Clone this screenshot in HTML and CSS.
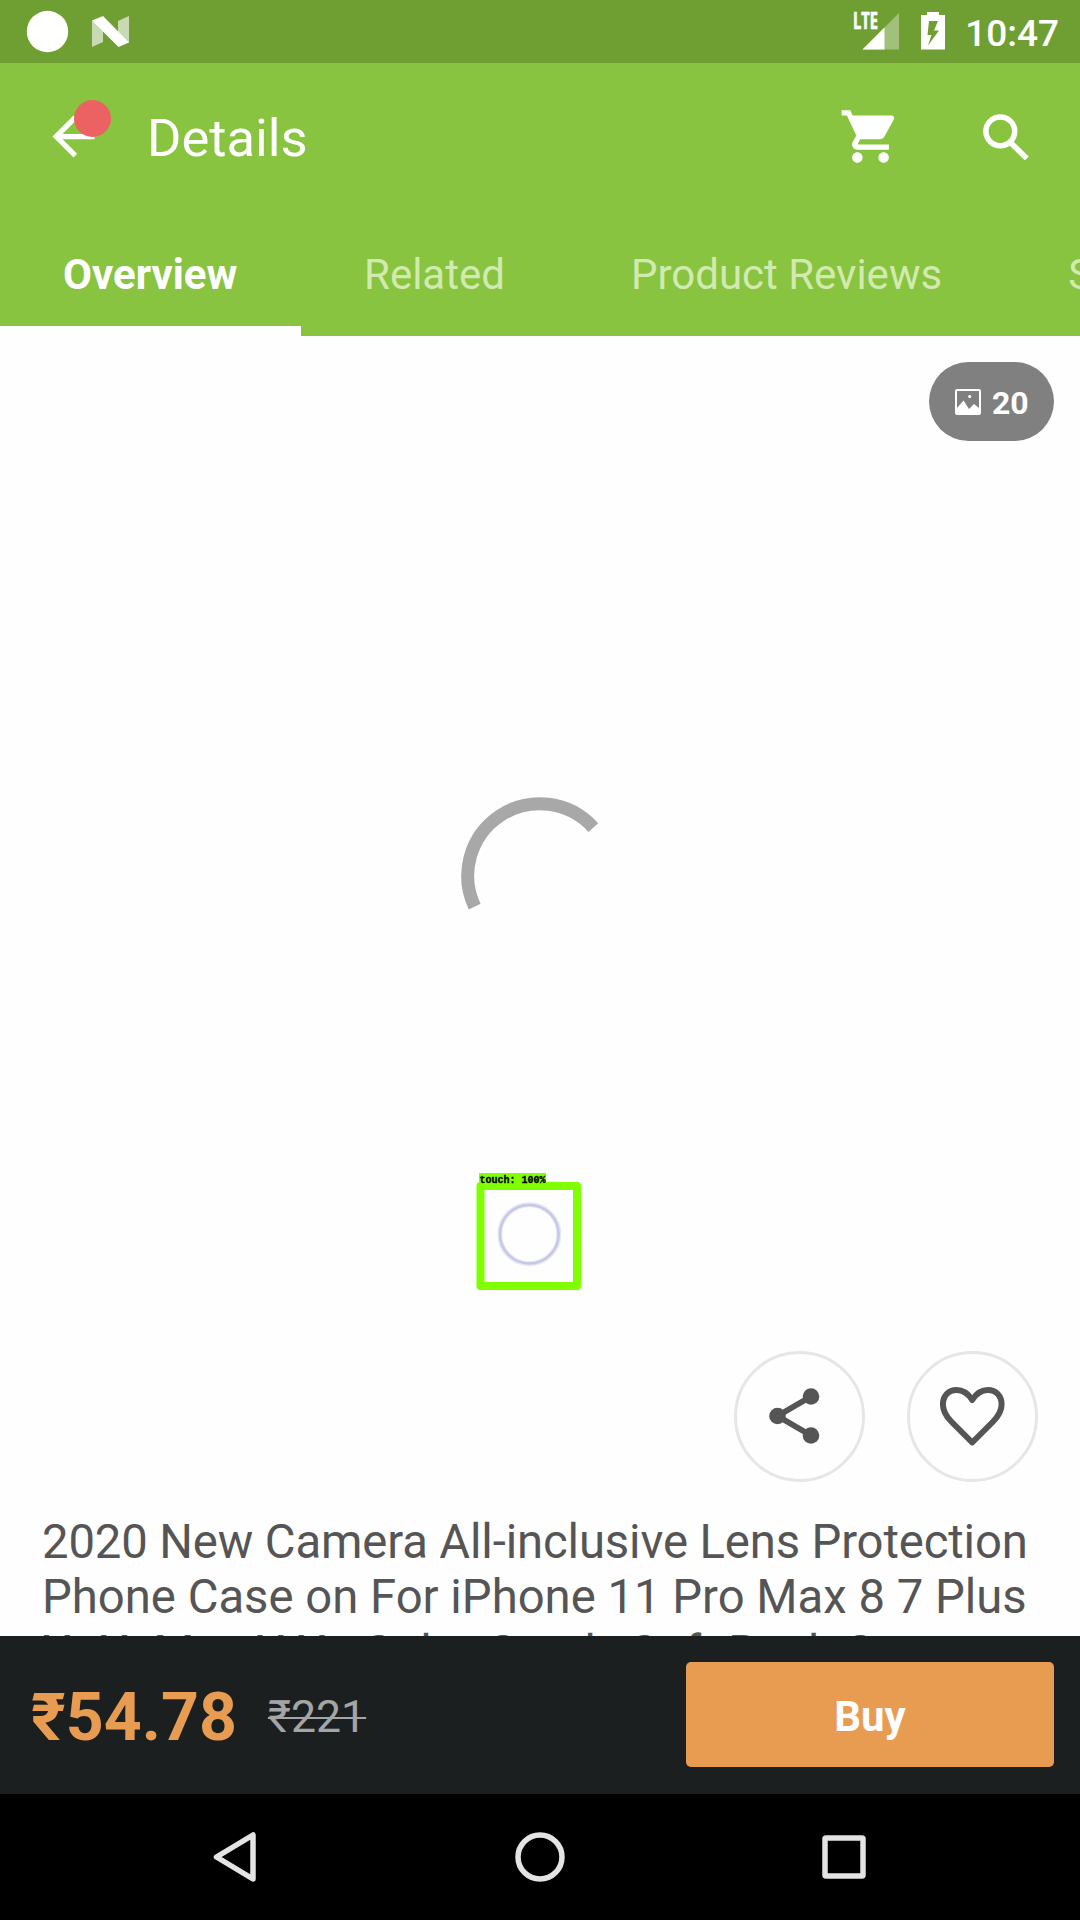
FILE: index.html
```html
<!DOCTYPE html>
<html lang="en">
<head>
<meta charset="utf-8">
<title>Details</title>
<link rel="stylesheet" href="styles.css">
</head>
<body>
<div class="screen">
  <div class="status-bar">
    <svg class="status-left" viewBox="0 0 140 63">
      <circle cx="47.5" cy="31.5" r="20.7" fill="#fff"/>
      <path d="M92 21l11 5v16L92 47zM118 21l11-5v27l-11-5z" fill="#fff" opacity=".62"/>
      <path d="M92 20.5L103 16l26 26.500L118.500 47z" fill="#fff"/>
    </svg>
    <div class="status-right">
      <svg class="signal" viewBox="0 0 46 37">
        <path d="M46 0V36.500H9.500z" fill="#fff" opacity=".35"/>
        <path d="M31.500 14.500v22h-22z" fill="#fff"/>
        <text class="lte" x="0" y="16.300" textLength="25" lengthAdjust="spacingAndGlyphs">LTE</text>
      </svg>
      <svg class="battery" viewBox="0 0 24 38"><path fill="#fff" fill-rule="evenodd" d="M6 0h12v3h6v34.500H0V3h6zM8 9L6.500 23h4L7 33.500L18 18.500h-5L17 9z"/></svg>
      <span class="time">10:47</span>
    </div>
  </div>
  <header class="header">
    <div class="toolbar">
      <div class="back">
        <svg viewBox="0 0 24 24"><path fill="#fff" d="M20 11H7.830l5.590-5.590L12 4l-8 8 8 8 1.410-1.410L7.830 13H20v-2z"/></svg>
        <span class="dot"></span>
      </div>
      <h1 class="title">Details</h1>
      <svg class="cart" viewBox="0 0 24 24"><path fill="#fff" d="M7 18c-1.100 0-1.990.900-1.990 2S5.900 22 7 22s2-.9 2-2-.9-2-2-2zM1 2v2h2l3.600 7.590-1.350 2.450c-.16.280-.25.610-.25.960 0 1.100.900 2 2 2h12v-2H7.420c-.14 0-.25-.11-.25-.25l.030-.12.900-1.630h7.450c.75 0 1.410-.41 1.750-1.030l3.580-6.490A1 1 0 0 0 20 4H5.210l-.94-2H1zm16 16c-1.100 0-1.990.900-1.990 2s.89 2 1.990 2 2-.9 2-2-.9-2-2-2z"/></svg>
      <svg class="search" viewBox="0 0 46 46"><circle cx="17.300" cy="17.300" r="14.400" fill="none" stroke="#fff" stroke-width="5.500"/><path d="M28.500 29.500L43.800 44.400" stroke="#fff" stroke-width="5.500"/></svg>
    </div>
    <nav class="tabs">
      <span class="tab active">Overview</span><span class="tab related">Related</span><span class="tab reviews">Product Reviews</span><span class="tab">Shipping</span>
    </nav>
  </header>
  <main class="content">
    <section class="gallery">
      <div class="count">
        <svg viewBox="0 0 26 26"><path fill="#fff" fill-rule="evenodd" d="M2 0h22a2 2 0 0 1 2 2v22a2 2 0 0 1-2 2H2a2 2 0 0 1-2-2V2A2 2 0 0 1 2 0zM2 2v17L8.500 11.500L14 20l5-5l5 4V2zM14.700 6a1.600 1.600 0 1 1 0 3.200a1.600 1.600 0 0 1 0-3.200z"/></svg>
        <span>20</span>
      </div>
      <svg class="spinner" viewBox="0 0 158 158"><path d="M13.700 109.600A72 72 0 0 1 132.300 30.600" fill="none" stroke="#a8a8a8" stroke-width="13"/></svg>
      <svg class="touch" viewBox="0 0 106 118">
        <path d="M4.500 13v100M101 13v100M4.500 13h96.500M4.500 113h96.500" fill="none" stroke="#80ff00" stroke-width="8" stroke-linecap="round"/>
        <path d="M3 0h67v11H3z" fill="#80ff00"/>
        <circle class="halo" cx="53.300" cy="61.200" r="29.500"/>
        <circle cx="53.300" cy="61.200" r="29.300" fill="none" stroke="#c6c8e4" stroke-width="2.500"/>
        <text class="touch-label" x="3.500" y="9.500" textLength="66">touch: 100%</text>
      </svg>
      <div class="actions">
        <div class="action"><svg viewBox="0 0 131 131"><path d="M77 45.500L43.500 65L77 84.500" fill="none" stroke="#555" stroke-width="5.800"/><g fill="#555"><circle cx="77" cy="45.500" r="8.300"/><circle cx="43.500" cy="65" r="8.300"/><circle cx="77" cy="84.500" r="8.300"/></g></svg></div>
        <div class="action"><svg viewBox="0 0 131 131"><path d="M65.200 91.500L44.700 71C37.700 64 35.900 59 35.900 53.500C35.900 45 41.500 39 49.500 39C56 39 61.200 42.500 65.200 49C69.200 42.500 74.500 39 81 39C89 39 94.600 45 94.600 53.500C94.600 59 92.700 64 85.700 71z" fill="none" stroke="#555" stroke-width="6" stroke-linejoin="round"/></svg></div>
      </div>
    </section>
    <p class="product"><span class="tight">2020 New Camera All-inclusive Lens Protection</span><br>Phone Case on For iPhone 11 Pro Max 8 7 Plus<br>Xr XsMax X Xs Color Candy Soft Back Cover</p>
  </main>
  <footer class="buy-bar">
    <span class="price">₹54.78</span>
    <span class="old-price">₹221</span>
    <div class="buy">Buy</div>
  </footer>
  <div class="nav-bar">
    <svg viewBox="0 0 50 50"><path d="M42 3v44L5.500 25z"/></svg>
    <svg viewBox="0 0 50 50"><circle cx="25" cy="25" r="22"/></svg>
    <svg viewBox="0 0 50 50"><rect x="6" y="6" width="38" height="38" rx="1"/></svg>
  </div>
</div>
</body>
</html>
```
FILE: styles.css
```css
* { box-sizing: border-box; }
body { margin: 0; background: #000; font-family: Roboto, sans-serif; }
svg { display: block; flex: none; }
.screen { width: 1080px; height: 1920px; display: flex; flex-direction: column; overflow: hidden; }
.status-bar { height: 63px; flex: none; background: #6f9f33; display: flex; justify-content: space-between; }
.status-left { width: 140px; height: 63px; }
.status-right { display: flex; align-items: flex-start; padding: 12px 21px 0 0; }
.signal { width: 46px; height: 37px; margin: 1px 22px 0 0; overflow: visible; }
.lte { font: 700 23px "Open Sans", sans-serif; fill: #fff; stroke: #fff; stroke-width: .7; }
.battery { width: 24px; height: 38px; margin-right: 20px; }
.time { color: #fff; font-size: 37px; font-weight: 500; line-height: 43px; }
.header { height: 273px; flex: none; background: #88c440; color: #fff; }
.toolbar { height: 147px; display: flex; align-items: center; padding-left: 42px; }
.back { position: relative; width: 63px; height: 63px; }
.back svg { width: 63px; height: 63px; }
.dot { position: absolute; left: 32px; top: -5px; width: 37px; height: 37px; border-radius: 50%; background: #ec6161; }
.title { margin: 3px auto 0 42px; font-size: 52.5px; font-weight: 400; }
.cart { width: 63px; height: 63px; margin-right: 81px; }
.search { width: 46px; height: 46px; margin-right: 51px; }
.tabs { height: 126px; display: flex; overflow: hidden; }
.tab { flex: none; padding: 0 63px; font-size: 42px; line-height: 129px; white-space: nowrap; color: #d2eab0; }
.tab.active { width: 301px; color: #fff; font-weight: 700; border-bottom: 10px solid #fff; }
.content { height: 1300px; flex: none; background: #fefefe; overflow: hidden; }
.gallery { position: relative; height: 1176px; display: flex; flex-direction: column; }
.count { align-self: flex-end; margin: 26px 26px 0 0; width: 125px; height: 79px; border-radius: 40px; background: #808080; color: #fff; display: flex; align-items: center; gap: 11px; padding-left: 26px; font-size: 32px; font-weight: 700; }
.count svg { width: 26px; height: 26px; }
.count span { padding-top: 2px; }
.spinner { width: 158px; height: 158px; margin: 356px auto 0; }
.touch { position: absolute; left: 476px; top: 837px; width: 106px; height: 118px; overflow: visible; }
.touch-label { font: 700 10px "Liberation Mono", monospace; fill: #000; stroke: #000; stroke-width: .3; }
.halo { fill: none; stroke: #e6e7f5; stroke-width: 5; }
.actions { display: flex; justify-content: flex-end; gap: 42px; margin: auto 42px 30px 0; }
.action { width: 131px; height: 131px; border: 3px solid #e6e6e6; border-radius: 50%; }
.action svg { width: 131px; height: 131px; margin: -3px; }
.product { margin: 3px 0 0 42px; font-size: 47.25px; line-height: 55.3px; color: #555; white-space: nowrap; }
.tight { letter-spacing: -.13px; }
.buy-bar { height: 158px; flex: none; background: #1c1f20; display: flex; align-items: center; padding: 0 26px 0 31px; }
.price { color: #e79c52; font-size: 66.2px; font-weight: 700; margin-top: 5px; }
.old-price { color: #a4a5a6; font-size: 44.6px; margin: 3px 0 0 31px; text-decoration: line-through; text-decoration-thickness: 2px; }
.buy { margin: -1px 0 0 auto; width: 368px; height: 105px; border-radius: 5px; background: #e79c52; color: #fff; font-size: 42px; font-weight: 700; display: flex; align-items: center; justify-content: center; padding-top: 3px; }
.nav-bar { height: 126px; flex: none; background: #000; display: flex; align-items: center; justify-content: space-between; padding: 0 211px 0 211px; }
.nav-bar svg { width: 50px; height: 50px; fill: none; stroke: #e4e4e4; stroke-width: 5.5; stroke-linejoin: round; }
```
